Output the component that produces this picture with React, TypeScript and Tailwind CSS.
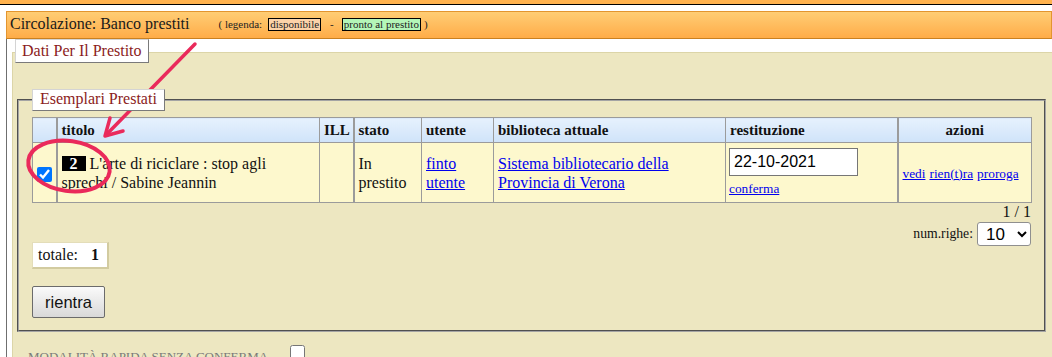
import React from "react";

const cellB = "border border-[#9b9b9b]";
const thBase = `${cellB} bg-linear-to-b from-[#e6f1fd] to-[#cfe3f9] px-[4px] font-bold text-[15px] leading-[17px] align-middle`;
const th = `${thBase} text-left`;
const td = `${cellB} bg-[#fdf8cd] px-[4px] text-[16px] leading-[19px] align-middle`;
const link = "text-[#0000ee] underline";

export default function App() {
  return (
    <div className="relative w-[1052px] h-[357px] overflow-hidden bg-white font-['Liberation_Serif',serif] text-[#111]">
      <div className="h-[4px] bg-[#ffb24e]" />
      <div className="h-px bg-black" />
      <div className="h-[6px]" />

      {/* header bar */}
      <div className="ml-[6px] h-[28px] flex items-center pb-[2px] pl-[3px] border border-[#e3952f] border-b-[#c98020] bg-linear-to-b from-[#ffcd74] to-[#ffac47]">
        <span className="text-[16px] leading-[18px] text-[#1a1a1a]">Circolazione: Banco prestiti</span>
        <span className="ml-[29px] flex items-center text-[11px] leading-[13px] text-[#222]">
          <span>( legenda:</span>
          <span className="ml-[6px] border border-black bg-[#fcd3a9] px-[1px] leading-[11px]">disponibile</span>
          <span className="ml-[9px]">-</span>
          <span className="ml-[8px] border border-black bg-[#b4f6b8] px-[1px] leading-[11px]">pronto al prestito</span>
          <span className="ml-[3px]">)</span>
        </span>
      </div>

      {/* main area */}
      <div className="ml-[6px] border-l border-[#6f6f6f] pl-[5px]">
        <div className="flex">
          <div className="relative z-10 ml-[3px] -mb-[11px] h-[24px] pt-[1px] px-[6px] bg-white border border-[#d4d4d4] border-r-[#7a7a7a] border-b-[#7a7a7a] text-[16px] leading-[19px] text-[#8b1c1c]">
            Dati Per Il Prestito
          </div>
        </div>
        <div className="bg-[#ede7c1] border-t border-l border-[#dcd5a8] h-[400px]">
          <div className="mt-[36px] flex">
            <div className="relative z-10 ml-[19px] -mb-[12px] h-[22px] px-[7px] bg-white border border-[#d4d4d4] border-r-[#7a7a7a] border-b-[#7a7a7a] text-[16px] leading-[18px] text-[#8b1c1c]">
              Esemplari Prestati
            </div>
          </div>
          <div className="ml-[4px] mr-[6px] border-2 [border-style:groove] border-[#a4a4a4] pt-[16px] px-[13px] pb-[12px]">
            <table className="table-fixed border-collapse w-[999px]">
              <colgroup>
                <col className="w-[24px]" />
                <col className="w-[263px]" />
                <col className="w-[34px]" />
                <col className="w-[68px]" />
                <col className="w-[72px]" />
                <col className="w-[232px]" />
                <col className="w-[172px]" />
                <col className="w-[134px]" />
              </colgroup>
              <thead>
                <tr className="h-[25px]">
                  <th className={th}></th>
                  <th className={`${th} border-l-2`}>titolo</th>
                  <th className={th}>ILL</th>
                  <th className={`${th} border-l-2`}>stato</th>
                  <th className={th}>utente</th>
                  <th className={th}>biblioteca attuale</th>
                  <th className={th}>restituzione</th>
                  <th className={`${thBase} border-l-2 text-center`}>azioni</th>
                </tr>
              </thead>
              <tbody>
                <tr className="h-[60px]">
                  <td className={`${td} text-center px-0`}>
                    <input type="checkbox" defaultChecked className="w-[15px] h-[15px] align-middle" />
                  </td>
                  <td className={`${td} border-l-2`}>
                    <span className="inline-block h-[15px] bg-black px-[8px] text-[16px] leading-[15px] font-bold text-white">2</span>{" "}
                    L'arte di riciclare : stop agli sprechi / Sabine Jeannin
                  </td>
                  <td className={td}></td>
                  <td className={`${td} border-l-2`}>In prestito</td>
                  <td className={td}>
                    <a href="#" className={link}>finto utente</a>
                  </td>
                  <td className={td}>
                    <a href="#" className={link}>Sistema bibliotecario della Provincia di Verona</a>
                  </td>
                  <td className={`${td} pl-[3px]`}>
                    <input
                      type="text"
                      defaultValue="22-10-2021"
                      className="block w-[129px] h-[28px] border border-[#767676] bg-white pl-[4px] font-['Liberation_Sans',sans-serif] text-[16px] text-black"
                    />
                    <div className="mt-[4px] leading-[16px]">
                      <a href="#" className={`${link} text-[13.33px]`}>conferma</a>
                    </div>
                  </td>
                  <td className={`${td} border-l-2`}>
                    <a href="#" className={`${link} text-[13.33px]`}>vedi</a>{" "}
                    <a href="#" className={`${link} text-[13.33px]`}>rien(t)ra</a>{" "}
                    <a href="#" className={`${link} text-[13.33px]`}>proroga</a>
                  </td>
                </tr>
              </tbody>
            </table>

            <div className="flex justify-between items-start">
              <div className="mt-[39px] flex h-[27px] items-center pl-[5px] pr-[8px] bg-white border-t border-l border-[#e3ddb9] border-r-2 border-b-2 border-r-[#d2cba0] border-b-[#d2cba0] text-[16px] leading-[18px]">
                <span>totale:</span>
                <span className="ml-[13px] font-bold">1</span>
              </div>
              <div className="flex flex-col items-end">
                <div className="text-[16px] leading-[18px]">1 / 1</div>
                <div className="mt-[1px] flex items-center">
                  <span className="text-[13.7px] leading-[16px]">num.righe:</span>
                  <select
                    defaultValue="10"
                    className="ml-[4px] w-[54px] h-[24px] border border-[#8f8f8f] rounded-[3px] bg-white pl-[4px] font-['Liberation_Sans',sans-serif] text-[17px] text-black"
                  >
                    <option value="10">10</option>
                    <option value="20">20</option>
                  </select>
                </div>
              </div>
            </div>

            <button className="mt-[17px] h-[32px] w-[73px] border border-[#6b6b6b] rounded-[2px] bg-linear-to-b from-[#fafafa] to-[#d9d9d9] font-['Liberation_Sans',sans-serif] text-[16.5px] text-[#111]">
              rientra
            </button>
          </div>

          <div className="mt-[13px] pl-[15px] flex items-start">
            <span className="mt-[4px] text-[13px] leading-[15px] uppercase text-[#7a7a7a]">Modalità rapida senza conferma</span>
            <input type="checkbox" className="ml-[22px] w-[15px] h-[15px]" />
          </div>
        </div>
      </div>

      {/* red annotation overlay */}
      <svg className="pointer-events-none absolute inset-0" width="1052" height="357" viewBox="0 0 1052 357">
        <g stroke="#ea2a5b" fill="none" strokeLinecap="round" strokeLinejoin="round">
          <line x1="195" y1="44" x2="106" y2="135" strokeWidth="3.5" />
          <polyline points="110,118 105,136 123,131" strokeWidth="3.5" />
          <ellipse cx="69" cy="166" rx="41" ry="25" transform="rotate(8 69 166)" strokeWidth="4" />
        </g>
      </svg>
    </div>
  );
}
